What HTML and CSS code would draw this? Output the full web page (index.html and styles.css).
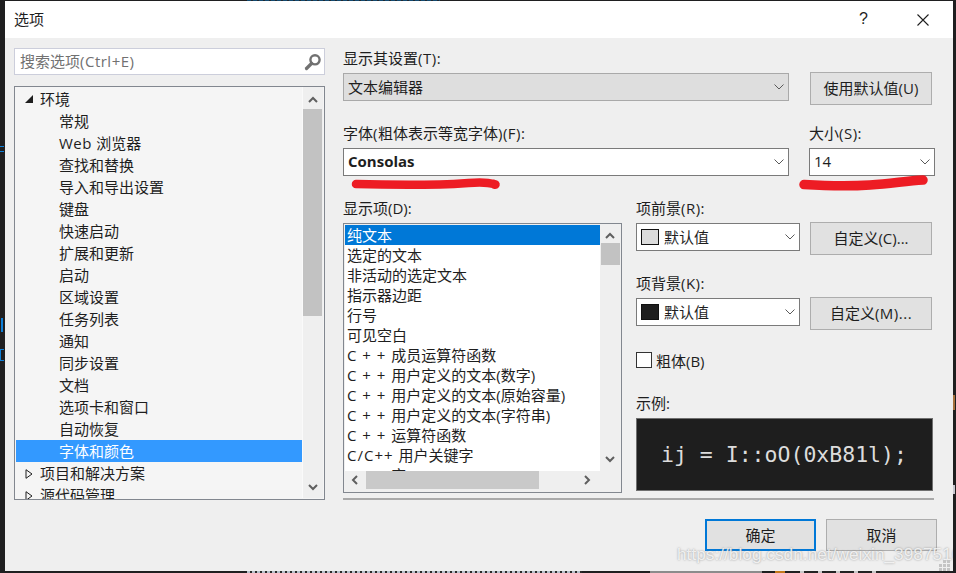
FILE: index.html
```html
<!DOCTYPE html>
<html lang="zh-CN">
<head>
<meta charset="utf-8">
<title>选项</title>
<link rel="stylesheet" href="styles.css">
</head>
<body>
<div class="bits">
  <i class="bit bit-a"></i><i class="bit bit-b"></i><i class="bit bit-c"></i>
  <i class="bit bit-d"></i><i class="bit bit-e"></i><i class="bit bit-f"></i>
  <i class="bit bit-g"></i><i class="bit bit-h"></i><i class="bit bit-i"></i>
  <i class="bit bit-j"></i>
</div>
<div class="dialog">
  <header class="titlebar">
    <span class="title">选项</span>
    <span class="help">?</span>
    <svg class="close" width="12" height="12" viewBox="0 0 12 12"><path d="M0.5 0.5L11.5 11.5M11.5 0.5L0.5 11.5" stroke="#1e1e1e" stroke-width="1.1" fill="none"/></svg>
  </header>
  <div class="main">
    <aside class="left">
      <div class="search">
        <span class="search-text">搜索选项<span class="lat">(Ctrl+E)</span></span>
        <svg class="search-icon" width="18" height="18" viewBox="0 0 18 18"><circle cx="11" cy="6.8" r="4.6" fill="none" stroke="#717171" stroke-width="2.4"/><path d="M7.5 10.5L2.5 15.5" stroke="#717171" stroke-width="3.2" stroke-linecap="round"/></svg>
      </div>
      <div class="tree">
        <div class="tree-rows">
          <div class="tree-row top"><svg class="twist" width="8" height="8" viewBox="0 0 8 8"><path d="M8 0V8H0Z" fill="#1e1e1e"/></svg>环境</div>
          <div class="tree-row">常规</div>
          <div class="tree-row"><span class="lat">Web </span>浏览器</div>
          <div class="tree-row">查找和替换</div>
          <div class="tree-row">导入和导出设置</div>
          <div class="tree-row">键盘</div>
          <div class="tree-row">快速启动</div>
          <div class="tree-row">扩展和更新</div>
          <div class="tree-row">启动</div>
          <div class="tree-row">区域设置</div>
          <div class="tree-row">任务列表</div>
          <div class="tree-row">通知</div>
          <div class="tree-row">同步设置</div>
          <div class="tree-row">文档</div>
          <div class="tree-row">选项卡和窗口</div>
          <div class="tree-row">自动恢复</div>
          <div class="tree-row selected">字体和颜色</div>
          <div class="tree-row top"><svg class="twist" width="8" height="10" viewBox="0 0 8 10"><path d="M1 0.7V9.3L7 5Z" fill="none" stroke="#1e1e1e" stroke-width="1"/></svg>项目和解决方案</div>
          <div class="tree-row top"><svg class="twist" width="8" height="10" viewBox="0 0 8 10"><path d="M1 0.7V9.3L7 5Z" fill="none" stroke="#1e1e1e" stroke-width="1"/></svg>源代码管理</div>
        </div>
        <div class="vscroll tree-scroll">
          <svg class="arrow" width="10" height="7" viewBox="0 0 10 7"><path d="M1 6L5 2L9 6" fill="none" stroke="#5f5f5f" stroke-width="2"/></svg>
          <div class="thumb tree-thumb"></div>
          <svg class="arrow arrow-end" width="10" height="7" viewBox="0 0 10 7"><path d="M1 1L5 5L9 1" fill="none" stroke="#5f5f5f" stroke-width="2"/></svg>
        </div>
      </div>
    </aside>
    <section class="right">
      <div class="upper-row">
        <div class="wide">
          <div class="label label-first">显示其设置<span class="lat">(T):</span></div>
          <div class="select disabled"><span class="select-text">文本编辑器</span><svg class="chev" width="10" height="6" viewBox="0 0 10 6"><path d="M0.5 0.5L5 5L9.5 0.5" fill="none" stroke="#5a5a5a"/></svg></div>
        </div>
        <button class="btn btn-default">使用默认值(U)</button>
      </div>
      <div class="upper-row second">
        <div class="wide">
          <div class="label label-font">字体<span class="lat">(</span>粗体表示等宽字体<span class="lat">)(F):</span></div>
          <div class="select"><span class="select-text bold">Consolas</span><svg class="chev" width="10" height="6" viewBox="0 0 10 6"><path d="M0.5 0.5L5 5L9.5 0.5" fill="none" stroke="#5a5a5a"/></svg></div>
        </div>
        <div class="size-col">
          <div class="label label-font">大小<span class="lat">(S):</span></div>
          <div class="select"><span class="select-text">14</span><svg class="chev" width="10" height="6" viewBox="0 0 10 6"><path d="M0.5 0.5L5 5L9.5 0.5" fill="none" stroke="#5a5a5a"/></svg></div>
        </div>
      </div>
      <div class="lower">
        <div class="list-col">
          <div class="label label-list">显示项(D):</div>
          <div class="listbox">
            <div class="list-top">
              <div class="list-rows">
                <div class="list-row selected-item">纯文本</div>
                <div class="list-row">选定的文本</div>
                <div class="list-row">非活动的选定文本</div>
                <div class="list-row">指示器边距</div>
                <div class="list-row">行号</div>
                <div class="list-row">可见空白</div>
                <div class="list-row"><span class="cpp">C + + </span>成员运算符函数</div>
                <div class="list-row"><span class="cpp">C + + </span>用户定义的文本(数字)</div>
                <div class="list-row"><span class="cpp">C + + </span>用户定义的文本(原始容量)</div>
                <div class="list-row"><span class="cpp">C + + </span>用户定义的文本(字符串)</div>
                <div class="list-row"><span class="cpp">C + + </span>运算符函数</div>
                <div class="list-row"><span class="cpp">C/C++ </span>用户关键字</div>
                <div class="list-row"><span class="cpp">C + + </span>宏</div>
              </div>
              <div class="vscroll list-scroll">
                <svg class="arrow" width="10" height="7" viewBox="0 0 10 7"><path d="M1 6L5 2L9 6" fill="none" stroke="#5f5f5f" stroke-width="2"/></svg>
                <div class="thumb list-thumb"></div>
                <svg class="arrow arrow-end" width="10" height="7" viewBox="0 0 10 7"><path d="M1 1L5 5L9 1" fill="none" stroke="#5f5f5f" stroke-width="2"/></svg>
              </div>
            </div>
            <div class="hscroll">
              <svg width="7" height="10" viewBox="0 0 7 10"><path d="M6 1L2 5L6 9" fill="none" stroke="#5f5f5f" stroke-width="2"/></svg>
              <div class="hthumb"></div>
              <svg width="7" height="10" viewBox="0 0 7 10"><path d="M1 1L5 5L1 9" fill="none" stroke="#5f5f5f" stroke-width="2"/></svg>
            </div>
          </div>
        </div>
        <div class="color-col">
          <div class="label label-list">项前景<span class="lat">(R):</span></div>
          <div class="color-row">
            <div class="select color-select"><span class="swatch swatch-light"></span><span class="swatch-text">默认值</span><svg class="chev" width="10" height="6" viewBox="0 0 10 6"><path d="M0.5 0.5L5 5L9.5 0.5" fill="none" stroke="#5a5a5a"/></svg></div>
            <button class="btn btn-custom">自定义(C)...</button>
          </div>
          <div class="label label-back">项背景<span class="lat">(K):</span></div>
          <div class="color-row">
            <div class="select color-select"><span class="swatch swatch-dark"></span><span class="swatch-text">默认值</span><svg class="chev" width="10" height="6" viewBox="0 0 10 6"><path d="M0.5 0.5L5 5L9.5 0.5" fill="none" stroke="#5a5a5a"/></svg></div>
            <button class="btn btn-custom">自定义<span class="lat">(M)...</span></button>
          </div>
          <label class="check"><span class="checkbox"></span>粗体(B)</label>
          <div class="label label-sample">示例:</div>
          <div class="sample">ij = I::oO(0xB81l);</div>
        </div>
      </div>
      <div class="separator"></div>
      <div class="footer">
        <button class="btn btn-foot primary">确定</button>
        <button class="btn btn-foot">取消</button>
      </div>
    </section>
  </div>
  <svg class="scribble scribble-font" width="156" height="16" viewBox="0 0 156 16"><path d="M6 8C40 9 60 9 90 8.500S125 5 138 7 143 9 144 8" fill="none" stroke="#ed1c24" stroke-width="8.500" stroke-linecap="round"/></svg>
  <svg class="scribble scribble-size" width="136" height="18" viewBox="0 0 136 18"><path d="M6 11.500C30 13 50 13.500 72 12S108 8 125 7" fill="none" stroke="#ed1c24" stroke-width="9.500" stroke-linecap="round"/></svg>
  <div class="watermark">https://blog.csdn.net/weixin_39875161</div>
  <svg class="grip" width="11" height="11" viewBox="0 0 11 11"><path d="M4 0h3v3H4zM8 0h3v3H8zM0 4h3v3H0zM4 4h3v3H4zM8 4h3v3H8zM0 8h3v3H0zM4 8h3v3H4zM8 8h3v3H8z" fill="#c4c4c4"/></svg>
</div>
</body>
</html>
```
FILE: styles.css
```css
* { box-sizing: border-box; }
html, body { margin: 0; padding: 0; }
body {
  width: 956px;
  height: 573px;
  overflow: hidden;
  background: #1f1f20;
  font-family: "Open Sans", "Noto Sans CJK SC", sans-serif;
  font-size: 15px;
  color: #1e1e1e;
  position: relative;
}
.lat { letter-spacing: 0.5px; }
.cpp { letter-spacing: 1px; }
.dialog {
  position: relative;
  width: 948px;
  height: 570px;
  margin: 1px 0 0 5px;
  background: #efefef;
  overflow: hidden;
}
.titlebar {
  height: 37px;
  background: #fff;
  display: flex;
  align-items: center;
  padding-left: 9px;
}
.title { flex: 1; padding-bottom: 2px; }
.help {
  font-family: "Liberation Sans", sans-serif;
  font-size: 16px;
  margin-right: 49px;
  padding-bottom: 2px;
}
.close { margin-right: 24px; }

.main {
  display: flex;
  gap: 18px;
  padding: 10px 0 0 9px;
}
.left { width: 311px; flex: none; }
.search {
  height: 27px;
  background: #fff;
  border: 1px solid #cccedb;
  display: flex;
  align-items: center;
  padding: 0 2px 0 5px;
  margin-bottom: 11px;
}
.search-text { flex: 1; color: #717171; padding-bottom: 2px; }
.tree {
  height: 414px;
  border: 1px solid #82878f;
  background: #f5f5f5;
  display: flex;
  padding: 1px 1px 0 1px;
  overflow: hidden;
}
.tree-rows { width: 286px; flex: none; overflow: hidden; }
.tree-row {
  height: 22px;
  line-height: 22px;
  padding-left: 43px;
  white-space: nowrap;
  position: relative;
}
.tree-row.top { padding-left: 24px; }
.twist { position: absolute; left: 9px; top: 7px; }
.tree-row.selected { background: #3399ff; color: #fff; }

.vscroll {
  flex: none;
  background: #efefef;
  display: flex;
  flex-direction: column;
  align-items: center;
}
.tree-scroll {
  width: 21px;
  height: 411px;
  border-left: 1px solid #fafafa;
  padding-right: 1px;
  margin-top: -1px;
  padding-top: 9px;
}
.thumb { width: 19px; background: #c2c2c2; flex: none; }
.tree-thumb { height: 207px; margin-top: 6px; }
.arrow-end { margin-top: auto; }
.tree-scroll .arrow-end { margin-bottom: 7px; }

.right { width: 594px; flex: none; }
.label { white-space: nowrap; }
.upper-row { display: flex; gap: 21px; }
.upper-row.second { margin-top: 21px; }
.wide { width: 446px; flex: none; }
.label-first { height: 25px; line-height: 20px; }
.label-font { height: 22px; line-height: 15px; }
.select {
  height: 28px;
  background: #fff;
  border: 1px solid #7a7a7a;
  display: flex;
  align-items: center;
  padding: 0 3px 0 4px;
}
.select.disabled { background: #dedede; border-color: #a9a9a9; }
.select-text { flex: 1; white-space: nowrap; padding-bottom: 2px; }
.bold { font-weight: 700; }
.chev { flex: none; margin-right: 1px; }
.btn {
  font: inherit;
  color: inherit;
  background: #e1e1e1;
  border: 1px solid #adadad;
  padding: 0 0 2px;
  white-space: nowrap;
}
.btn-default { width: 122px; height: 33px; margin-top: 24px; }
.size-col { width: 126px; margin-left: -1px; flex: none; }

.lower { display: flex; gap: 14px; margin-top: 23px; }
.list-col { width: 279px; flex: none; }
.label-list { height: 24px; line-height: 18px; }
.listbox {
  height: 270px;
  border: 1px solid #82878f;
  background: #efefef;
  padding: 1px;
  display: flex;
  flex-direction: column;
}
.list-top { display: flex; height: 246px; overflow: hidden; background: #fff; }
.list-rows { width: 255px; flex: none; overflow: hidden; }
.list-row {
  height: 20px;
  line-height: 20px;
  padding-left: 2px;
  white-space: nowrap;
}
.selected-item { background: #0078d7; color: #fff; }
.list-scroll { width: 20px; height: 246px; padding-top: 7px; }
.list-thumb { height: 22px; margin-top: 4px; }
.list-scroll .arrow-end { margin-bottom: 8px; }
.hscroll {
  height: 20px;
  flex: none;
  display: flex;
  align-items: center;
  padding: 0 0 2px 6px;
}
.hthumb { width: 173px; height: 18px; background: #c9c9c9; margin: 0 45px 0 8px; }

.color-col { width: 297px; flex: none; }
.color-row { display: flex; gap: 10px; height: 28px; }
.color-select { width: 164px; flex: none; padding-left: 4px; }
.swatch { width: 18px; height: 16px; border: 1px solid #111; flex: none; margin-right: 5px; }
.swatch-light { background: #dcdcdc; }
.swatch-dark { background: #1e1e1e; }
.swatch-text { flex: 1; padding-bottom: 2px; }
.btn-custom { width: 122px; height: 33px; margin-top: -1px; flex: none; }
.label-back { height: 23px; margin-top: 24px; line-height: 17px; }
.check {
  display: flex;
  align-items: center;
  height: 16px;
  margin-top: 26px;
}
.checkbox {
  width: 16px;
  height: 16px;
  border: 1px solid #333;
  background: #fff;
  margin-right: 4px;
  flex: none;
}
.label-sample { height: 23px; margin-top: 27px; line-height: 17px; }
.sample {
  height: 73px;
  background: #1e1e1e;
  border: 1px solid #6f6f6f;
  color: #dcdcdc;
  font-family: "DejaVu Sans Mono", monospace;
  font-size: 21.500px;
  line-height: 71px;
  padding-left: 24px;
  white-space: nowrap;
}
.separator { height: 2px; background: #a9a9a9; margin-top: 5px; width: 591px; }
.footer {
  display: flex;
  justify-content: flex-end;
  gap: 10px;
  margin-top: 19px;
}
.btn-foot { width: 111px; height: 32px; }
.primary { border: 2px solid #0078d7; }

.scribble { position: absolute; }
.scribble-font { left: 345px; top: 175px; }
.scribble-size { left: 793px; top: 172px; }
.watermark {
  position: absolute;
  left: 672px;
  top: 543px;
  font-family: "Liberation Sans", sans-serif;
  font-size: 17.300px;
  color: rgba(255, 255, 255, 0.8);
  text-shadow: 0 0 2px rgba(120, 120, 120, 0.8);
  white-space: nowrap;
}
.grip { position: absolute; right: 3px; bottom: 0; }

.bit { position: absolute; display: block; }
.bit-a { left: 0; top: 146px; width: 4px; height: 1px; background: #0e7fd8; box-shadow: 0 5px 0 #0e7fd8; }
.bit-b { left: 1px; top: 318px; width: 2px; height: 14px; background: #0e7fd8; }
.bit-c { left: 0; top: 349px; width: 4px; height: 12px; border: 1.500px solid #0e7fd8; border-right: none; }
.bit-d { left: 247px; top: 0; width: 193px; height: 1px; background: repeating-linear-gradient(90deg, #134a70 0 4px, #1f2a33 4px 6px); }
.bit-e { left: 247px; top: 571px; width: 335px; height: 2px; background: repeating-linear-gradient(90deg, #b9c2cc 0 3px, #2a2a2a 3px 5px); }
.bit-f { left: 650px; top: 571px; width: 112px; height: 2px; background: #8c8c8c; }
.bit-g { left: 775px; top: 571px; width: 10px; height: 2px; background: #c47a1c; }
.bit-h { left: 953px; top: 395px; width: 2px; height: 15px; background: #a5703c; }
.bit-i { left: 953px; top: 485px; width: 2px; height: 9px; background: #c8c8d0; }
.bit-j { left: 800px; top: 571px; width: 90px; height: 2px; background: repeating-linear-gradient(90deg, #c8c8c8 0 4px, #222 4px 18px); }
```
